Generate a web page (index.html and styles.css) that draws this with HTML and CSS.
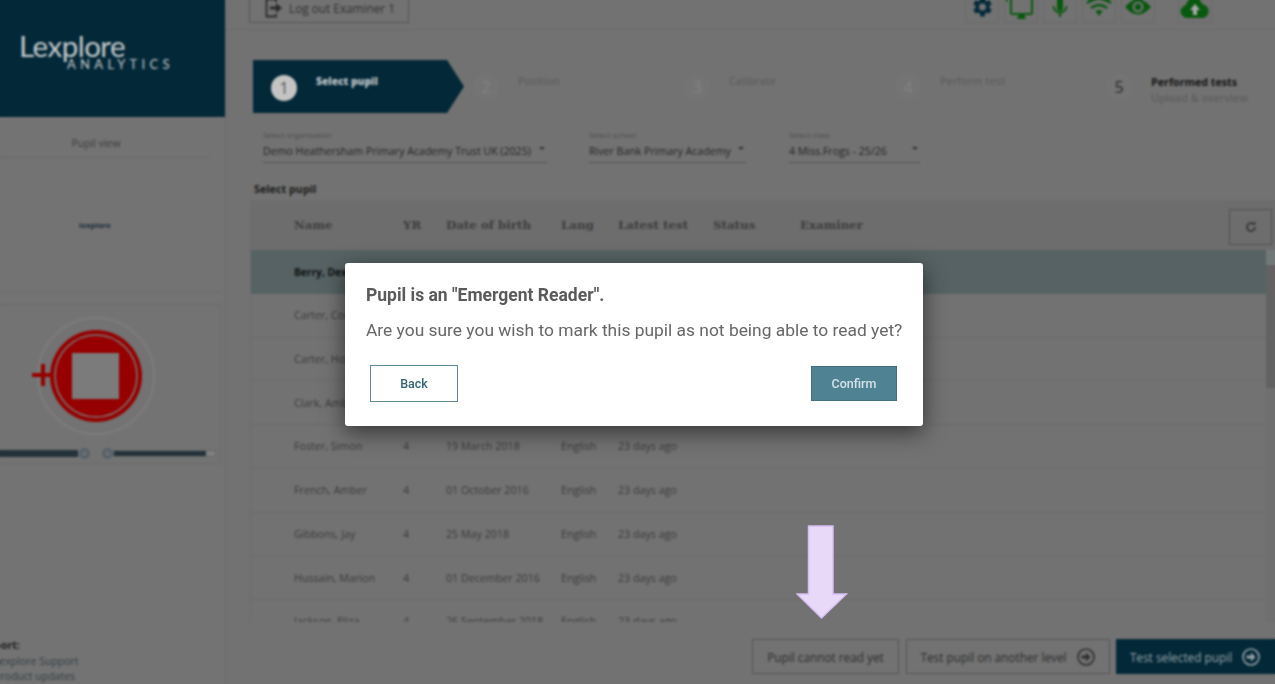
FILE: index.html
```html
<!DOCTYPE html>
<html lang="en">
<head>
  <meta charset="UTF-8">
  <title>Lexplore Analytics</title>
  <link rel="stylesheet" href="styles.css">
</head>
<body>
  <div class="page">
    <!-- Left column -->
    <aside class="sidebar">
      <div class="brand">
        <div class="brand-name">Lexplore</div>
        <div class="brand-sub">ANALYTICS</div>
      </div>
      <div class="pupil-tab">Pupil view</div>
      <div class="mini-logo-box"><span class="mini-logo">lexplore</span></div>
      <div class="record-panel">
        <svg class="record" width="226" height="116" viewBox="0 0 226 116">
          <circle cx="96" cy="61" r="58" fill="none" stroke="#7f8080" stroke-width="1.5"/>
          <circle cx="96" cy="61" r="46" fill="#960000"/>
          <circle cx="96" cy="61" r="41" fill="none" stroke="#7b7b7b" stroke-width="1.5"/>
          <rect x="72" y="38" width="47" height="46" fill="#7b7b7b"/>
          <path d="M32 60 H52 M43 49 V71" stroke="#960000" stroke-width="4" fill="none"/>
        </svg>
        <div class="record-label">Position</div>
        <div class="sliders">
          <div class="track track-left"></div>
          <div class="knob"></div>
          <div class="knob knob-right"></div>
          <div class="track track-right"><div class="track-fill"></div></div>
        </div>
      </div>
      <div class="support">
        <div class="support-title">Support:</div>
        <div class="support-link">Lexplore Support</div>
        <div class="support-link">Product updates</div>
      </div>
    </aside>

    <main class="main">
      <div class="topbar">
        <button class="logout">
          <svg width="18" height="20" viewBox="0 0 18 20"><path d="M11 4 V1.500 H1.500 V18.500 H11 V16" fill="none" stroke="#2b2b2b" stroke-width="1.800"/><path d="M5 8.500 H11 V5 L17 10 L11 15 V11.500 H5 Z" fill="#2b2b2b"/></svg>
          Log out Examiner 1
        </button>
        <div class="tools">
          <div class="tool">
            <svg width="24" height="24" viewBox="0 0 24 24"><path fill="#04293a" d="M19.400 13a7.500 7.500 0 0 0 0-2l2.300-1.800-2.200-3.800-2.700 1.100a7.500 7.500 0 0 0-1.700-1L14.700 2.600h-4.400l-.4 2.900a7.500 7.500 0 0 0-1.700 1L5.500 5.400 3.300 9.200 5.600 11a7.500 7.500 0 0 0 0 2l-2.300 1.800 2.200 3.800 2.700-1.100a7.500 7.500 0 0 0 1.700 1l.4 2.900h4.400l.4-2.900a7.500 7.500 0 0 0 1.700-1l2.700 1.100 2.200-3.800zM12.500 15.500a3.500 3.500 0 1 1 0-7 3.500 3.500 0 0 1 0 7z"/></svg>
          </div>
          <div class="tool">
            <svg width="30" height="24" viewBox="0 0 30 24"><path d="M1 0 V7 M1 1 H5" stroke="#09580f" stroke-width="1.500" fill="none"/><rect x="5" y="0" width="21" height="19" rx="1.500" fill="none" stroke="#09580f" stroke-width="2"/><path d="M13 19 H18 L20 24 H11 Z" fill="#09580f"/></svg>
          </div>
          <div class="tool">
            <svg width="24" height="24" viewBox="0 0 24 24"><rect x="9" y="0" width="6" height="16" rx="3" fill="#09580f"/><path d="M5.500 11 a6.500 6.500 0 0 0 13 0" fill="none" stroke="#09580f" stroke-width="1.800"/><rect x="11" y="17" width="2" height="5" fill="#09580f"/></svg>
          </div>
          <div class="tool">
            <svg width="26" height="24" viewBox="0 0 26 24"><path d="M1 8 Q13 0 25 8 M5 13 Q13 7 21 13" fill="none" stroke="#09580f" stroke-width="2.600"/><path d="M9.500 16 Q13 14 16.500 16 L13 21 Z" fill="#09580f"/></svg>
          </div>
          <div class="tool">
            <svg width="28" height="24" viewBox="0 0 28 24"><path d="M1 12 Q14 -3 27 12 Q14 27 1 12 Z" fill="#09580f"/><circle cx="14" cy="12" r="5.500" fill="#727272"/><circle cx="14" cy="12" r="3.200" fill="#09580f"/></svg>
          </div>
          <div class="tool tool-upload">
            <svg width="30" height="24" viewBox="0 0 30 24"><path d="M7 23 a6.500 6.500 0 0 1-1.500-12.800 a9 9 0 0 1 17-1 a7 7 0 0 1 .5 13.800 Z" fill="#09580f"/><path d="M15 9 L20 15 H17 V20 H13 V15 H10 Z" fill="#a8a8a8"/></svg>
          </div>
        </div>
      </div>

      <div class="stepper">
        <div class="step step-active">
          <span class="step-num">1</span>
          <div class="step-text"><b>Select pupil</b></div>
        </div>
        <div class="step"><span class="step-num">2</span><div class="step-text">Position</div></div>
        <div class="step"><span class="step-num">3</span><div class="step-text">Calibrate</div></div>
        <div class="step"><span class="step-num">4</span><div class="step-text">Perform test</div></div>
        <div class="step step-last">
          <span class="step-num">5</span>
          <div class="step-text"><b>Performed tests</b><br>Upload &amp; overview</div>
        </div>
      </div>

      <div class="filters">
        <div class="filter filter-org">
          <label>Select organisation</label>
          <div class="filter-value">Demo Heathersham Primary Academy Trust UK (2025)</div>
        </div>
        <div class="filter filter-school">
          <label>Select school</label>
          <div class="filter-value">River Bank Primary Academy</div>
        </div>
        <div class="filter filter-class">
          <label>Select class</label>
          <div class="filter-value">4 Miss.Frogs - 25/26</div>
        </div>
      </div>

      <div class="section-title">Select pupil</div>

      <div class="table">
        <div class="row row-head">
          <span>Name</span><span>YR</span><span>Date of birth</span><span>Lang</span><span>Latest test</span><span>Status</span><span>Examiner</span>
          <button class="refresh">
            <svg width="12" height="12" viewBox="0 0 12 12"><path d="M10 6 a4 4 0 1 1-1.200-2.800" fill="none" stroke="#2e2e2e" stroke-width="1.500"/><path d="M7 3.500 H10.500 V0.500 Z" fill="#2e2e2e"/></svg>
          </button>
        </div>
        <div class="rows">
          <div class="row row-selected"><span>Berry, Dexter</span><span>4</span><span>12 April 2018</span><span>English</span><span>23 days ago</span></div>
          <div class="row"><span>Carter, Connor</span><span>4</span><span>03 June 2018</span><span>English</span><span>23 days ago</span></div>
          <div class="row"><span>Carter, Holly</span><span>4</span><span>22 July 2018</span><span>English</span><span>23 days ago</span></div>
          <div class="row"><span>Clark, Amber</span><span>4</span><span>08 May 2018</span><span>English</span><span>23 days ago</span></div>
          <div class="row"><span>Foster, Simon</span><span>4</span><span>19 March 2018</span><span>English</span><span>23 days ago</span></div>
          <div class="row"><span>French, Amber</span><span>4</span><span>01 October 2016</span><span>English</span><span>23 days ago</span></div>
          <div class="row"><span>Gibbons, Jay</span><span>4</span><span>25 May 2018</span><span>English</span><span>23 days ago</span></div>
          <div class="row"><span>Hussain, Marion</span><span>4</span><span>01 December 2016</span><span>English</span><span>23 days ago</span></div>
          <div class="row"><span>Jackson, Eliza</span><span>4</span><span>26 September 2018</span><span>English</span><span>23 days ago</span></div>
          <div class="scrollbar"><div class="scroll-cap"></div><div class="scroll-thumb"></div></div>
        </div>
      </div>

      <div class="actions">
        <button class="action action-cannot">Pupil cannot read yet</button>
        <button class="action action-level">Test pupil on another level
          <svg width="20" height="20" viewBox="0 0 20 20"><circle cx="10" cy="10" r="8" fill="none" stroke="#2e2e2e" stroke-width="1.600"/><path d="M5.500 8.500 H10 V5.500 L14.500 10 L10 14.500 V11.500 H5.500 Z" fill="#2e2e2e"/></svg>
        </button>
        <button class="action action-test">Test selected pupil
          <svg width="20" height="20" viewBox="0 0 20 20"><circle cx="10" cy="10" r="8" fill="none" stroke="#98a3a8" stroke-width="1.600"/><path d="M5.500 8.500 H10 V5.500 L14.500 10 L10 14.500 V11.500 H5.500 Z" fill="#98a3a8"/></svg>
        </button>
      </div>
    </main>
  </div>

  <!-- Dialog -->
  <div class="modal">
    <h2 class="modal-title">Pupil is an "Emergent Reader".</h2>
    <p class="modal-text">Are you sure you wish to mark this pupil as not being able to read yet?</p>
    <div class="modal-buttons">
      <button class="btn-back">Back</button>
      <button class="btn-confirm">Confirm</button>
    </div>
  </div>

  <!-- Annotation arrow -->
  <svg class="arrow" width="52" height="96" viewBox="0 0 52 96">
    <path d="M12.500 1 H37 V69 H50.500 L25.500 93 L1 69 H12.500 Z" fill="#e8d9f8" stroke="#d6bdf3" stroke-width="1.500"/>
  </svg>
</body>
</html>
```

FILE: styles.css
```css
/* General */
html, body {
  margin: 0;
  height: 684px;
  overflow: hidden;
  background: #727272;
  font-family: "Open Sans", sans-serif;
}

button {
  font-family: inherit;
  background: transparent;
  cursor: pointer;
}

.page {
  position: relative;
  display: flex;
  height: 684px;
  overflow: hidden;
}

/* Soft layer over the page behind the dialog */
.page::after {
  content: "";
  position: absolute;
  inset: 0;
  backdrop-filter: blur(0.8px);
}

/* Sidebar */
.sidebar {
  width: 226px;
  flex: none;
  display: flex;
  flex-direction: column;
  overflow: hidden;
  background: #737373;
  border-right: 1px solid #6c6c6c;
  box-sizing: border-box;
}

.brand {
  height: 117px;
  flex: none;
  box-sizing: border-box;
  padding: 32px 0 0 19px;
  background: #032838;
  color: #c4c9cb;
}

.brand-name {
  font-family: "Lato", sans-serif;
  font-size: 29.500px;
  line-height: 27px;
  letter-spacing: -0.5px;
}

.brand-sub {
  margin: 0 0 0 48px;
  font-family: "Lato", sans-serif;
  font-size: 13px;
  line-height: 10px;
  letter-spacing: 4.300px;
}

.pupil-tab {
  width: 210px;
  height: 41px;
  flex: none;
  box-sizing: border-box;
  padding: 18px 18px 0 0;
  border-bottom: 1px solid #696969;
  text-align: center;
  font-size: 10.500px;
  line-height: 17px;
  color: #3e3e3e;
}

.mini-logo-box {
  width: 221px;
  height: 134px;
  flex: none;
  box-sizing: border-box;
  border-bottom: 1px solid #6a6a6a;
  display: flex;
  justify-content: center;
  align-items: center;
  padding: 0 31px 0 0;
  font-size: 7.800px;
  font-weight: 700;
  color: #1c2d3b;
}

.record-panel {
  width: 221px;
  height: 160px;
  flex: none;
  margin-top: 12px;
  box-sizing: border-box;
  padding-top: 10px;
  border-top: 1px solid #6b6b6b;
  border-right: 1px solid #6b6b6b;
  border-bottom: 1px solid #6b6b6b;
  overflow: hidden;
}

.record {
  display: block;
  overflow: visible;
}

.record-label {
  margin: -3px 0 0 -42px;
  font-size: 10px;
  line-height: 14px;
  color: #2b2b2b;
}

.sliders {
  display: flex;
  align-items: center;
  margin-top: 5px;
  height: 12px;
}

.track {
  height: 7px;
  box-sizing: border-box;
}

.track-left {
  width: 78px;
  background: #24323a;
}

.track-right {
  width: 103px;
  border: 1px solid #666;
  background: #808080;
}

.track-fill {
  width: 92px;
  height: 100%;
  background: #24323a;
}

.knob {
  width: 11px;
  height: 11px;
  margin-left: 1px;
  box-sizing: border-box;
  border: 3px solid #56616a;
  border-radius: 50%;
  background: #6e6e6e;
}

.knob-right {
  margin: 0 0 0 12px;
}

.support {
  margin-top: auto;
  height: 46px;
  font-size: 10.500px;
  line-height: 15.500px;
  color: #343f44;
}

.support-title {
  margin-left: -25px;
  font-weight: 700;
  color: #222;
}

.support-link {
  margin-left: -6px;
  white-space: nowrap;
}

/* Main column */
.main {
  flex: 1;
  min-width: 0;
  display: flex;
  flex-direction: column;
}

.topbar {
  height: 30px;
  flex: none;
  box-sizing: border-box;
  padding: 0 63px 6px 23px;
  border-bottom: 1px solid #6a6a6a;
  display: flex;
  justify-content: space-between;
  align-items: flex-end;
}

.logout {
  width: 160px;
  height: 34px;
  flex: none;
  padding: 3px 0 0 15px;
  border: 1px solid #555;
  display: flex;
  align-items: center;
  gap: 6px;
  font-size: 11.800px;
  color: #333;
}

.tools {
  display: flex;
  gap: 5px;
}

.tool {
  width: 34px;
  height: 34px;
  box-sizing: border-box;
  border: 1px solid #6a6a6a;
  display: flex;
  justify-content: center;
  align-items: flex-end;
  overflow: hidden;
  padding-bottom: 3px;
}

.tool-upload {
  margin-left: 18px;
}

/* Stepper */
.stepper {
  display: flex;
  height: 53px;
  flex: none;
  margin: 30px 0 0 27px;
}

.step {
  width: 211px;
  flex: none;
  box-sizing: border-box;
  padding: 15px 0 0 22px;
  display: flex;
  gap: 19px;
  font-size: 10.700px;
  line-height: 13px;
  color: #5f5f5f;
  font-weight: 600;
}

.step-active {
  background: #032838;
  clip-path: polygon(0 0, 194px 0, 100% 50%, 194px 100%, 0 100%);
  padding-left: 18px;
  color: #bcc3c6;
  font-size: 10.300px;
}

.step-num {
  width: 26px;
  height: 26px;
  flex: none;
  margin: -1px 0 0 -13px;
  border-radius: 50%;
  display: flex;
  align-items: center;
  justify-content: center;
  font-size: 16px;
  font-weight: 400;
  color: #828282;
  background: #747474;
}

.step-active .step-num {
  margin: 0;
  background: #c4c4c4;
  color: #555;
}

.step-last {
  flex: 1;
  width: auto;
  color: #5e5e5e;
}

.step-last b {
  color: #161616;
  font-weight: 700;
}

.step-last .step-num {
  color: #2a2a2a;
}

.step-last .step-text {
  line-height: 15.500px;
}

/* Filters */
.filters {
  display: flex;
  flex: none;
  margin: 16px 0 0 37px;
  color: #262626;
}

.filter {
  position: relative;
  height: 34px;
  box-sizing: border-box;
  border-bottom: 1px solid #555;
}

.filter label {
  display: block;
  font-size: 7.800px;
  line-height: 12px;
  color: #4e4e4e;
}

.filter-value {
  margin-top: 1px;
  font-size: 10.600px;
  line-height: 18px;
  white-space: nowrap;
}

.filter::after {
  content: "";
  position: absolute;
  right: 2px;
  top: 18px;
  border-left: 3px solid transparent;
  border-right: 3px solid transparent;
  border-top: 3px solid #333;
}

.filter-org {
  width: 284px;
  margin-right: 42px;
}

.filter-school {
  width: 157px;
  margin-right: 43px;
}

.filter-class {
  width: 131px;
}

.section-title {
  flex: none;
  margin: 19px 0 0 28px;
  height: 18px;
  font-size: 10.800px;
  line-height: 14px;
  font-weight: 700;
  color: #1c1c1c;
}

/* Table */
.table {
  flex: none;
  height: 422px;
  margin-left: 24px;
  overflow: hidden;
  display: flex;
  flex-direction: column;
  border-left: 1px solid #6b6b6b;
}

.row {
  display: grid;
  grid-template-columns: 109px 43px 115px 57px 95px 87px 1fr;
  align-items: center;
  height: 43.750px;
  box-sizing: border-box;
  padding-left: 43px;
  flex: none;
  border-bottom: 1px solid #696969;
  font-size: 10.700px;
  color: #3c3c3c;
  white-space: nowrap;
}

.row-head {
  position: relative;
  height: 50px;
  background: #6d6d6d;
  border-bottom: 0;
  font-family: "DejaVu Serif", serif;
  font-size: 11.800px;
  font-weight: 700;
  color: #3d3d3d;
}

.rows {
  position: relative;
  flex: 1;
}

.row-selected {
  background: #566263;
  border-bottom: 0;
  color: #0e1212;
  font-size: 10.200px;
  font-weight: 700;
}

.refresh {
  position: absolute;
  right: 3px;
  top: 9px;
  width: 43px;
  height: 36px;
  border: 1px solid #505050;
  padding: 0;
  display: flex;
  align-items: center;
  justify-content: center;
}

.scrollbar {
  position: absolute;
  right: 0;
  top: 0;
  width: 9px;
  height: 100%;
  background: #6f6f6f;
}

.scroll-cap {
  height: 15px;
  background: #727878;
}

.scroll-thumb {
  height: 123px;
  background: #626262;
}

/* Bottom buttons */
.actions {
  flex: 1;
  display: flex;
  justify-content: flex-end;
  align-items: flex-start;
  gap: 7px;
  padding-top: 17px;
}

.action {
  height: 35px;
  flex: none;
  box-sizing: border-box;
  padding: 0;
  border: 1px solid #555;
  display: flex;
  align-items: center;
  justify-content: center;
  gap: 9px;
  font-size: 11.800px;
  color: #2e2e2e;
}

.action-cannot {
  width: 147px;
}

.action-level {
  width: 204px;
}

.action-test {
  width: 159px;
  margin-left: -1px;
  border: 0;
  background: #032838;
  color: #98a3a8;
}

/* Dialog */
.modal {
  position: absolute;
  left: 345px;
  top: 263px;
  width: 578px;
  height: 163px;
  box-sizing: border-box;
  padding: 21px 21px 0;
  background: #fff;
  border-radius: 3px;
  box-shadow: 0 6px 22px rgba(0, 0, 0, 0.55);
  font-family: "Roboto", sans-serif;
  color: #5a5a5a;
  filter: blur(0.4px);
}

.modal-title {
  margin: 0;
  font-size: 17.500px;
  line-height: 22px;
  font-weight: 700;
}

.modal-text {
  margin: 14px 0 0;
  font-size: 17.400px;
  line-height: 20px;
  white-space: nowrap;
  color: #666;
}

.modal-buttons {
  display: flex;
  justify-content: space-between;
  margin: 25px 5px 0 4px;
}

.btn-back,
.btn-confirm {
  font-family: "Roboto", sans-serif;
  font-size: 12.500px;
  font-weight: 500;
  padding: 0;
}

.btn-back {
  width: 88px;
  height: 37px;
  border: 1px solid #5d8a98;
  background: #fff;
  color: #2f6475;
}

.btn-confirm {
  width: 86px;
  height: 35px;
  margin-top: 1px;
  border: 1px solid #43707f;
  background: #4f8293;
  color: #d5e3e8;
}

.arrow {
  position: absolute;
  left: 796px;
  top: 525px;
}
```
